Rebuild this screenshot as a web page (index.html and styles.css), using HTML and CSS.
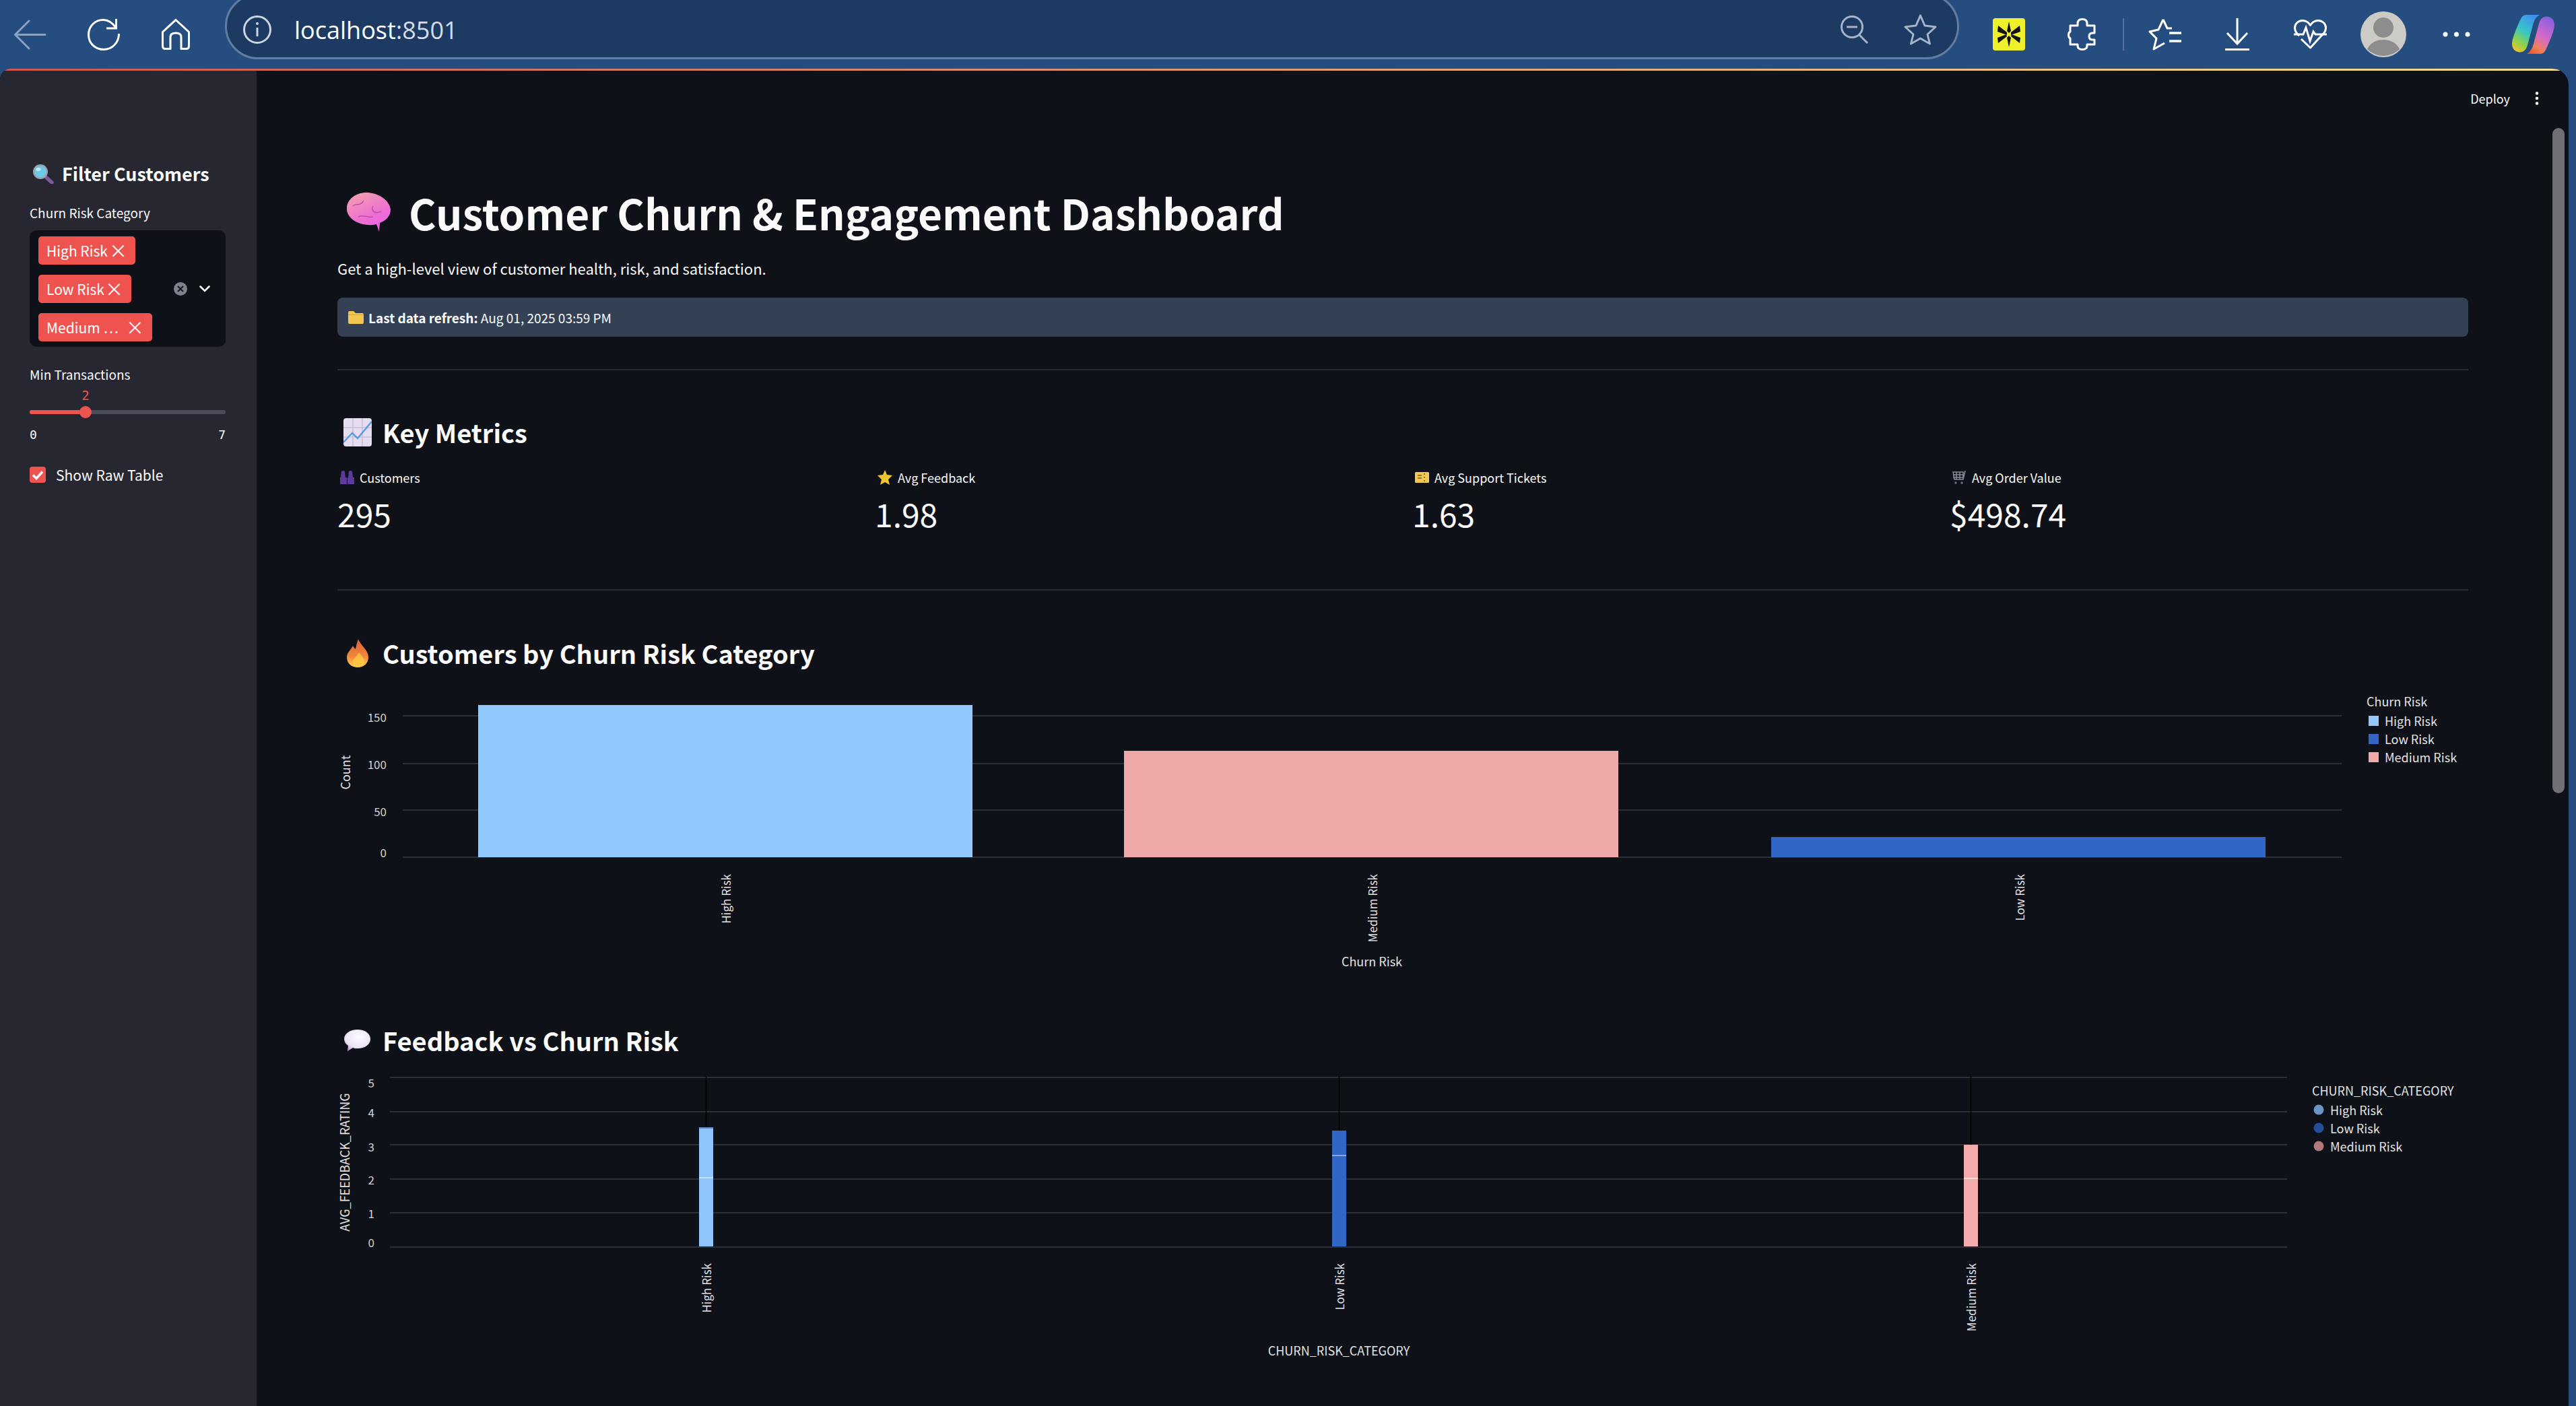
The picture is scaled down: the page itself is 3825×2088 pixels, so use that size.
FILE: index.html
```html
<!DOCTYPE html>
<html lang="en">
<head>
<meta charset="utf-8">
<title>Customer Churn &amp; Engagement Dashboard</title>
<link rel="stylesheet" href="styles.css">
</head>
<body>
<header class="toolbar">
  <svg class="tb back" width="49" height="45" viewBox="0 0 49 45"><path d="M47 22.5H3M23 2 2.500 22.500 23 43" fill="none" stroke="#8ba2c2" stroke-width="3" stroke-linecap="round" stroke-linejoin="round"/></svg>
  <svg class="tb reload" width="48" height="48" viewBox="0 0 48 48"><path d="M25 2.500C12 1.500 1.500 11.500 1.500 24.500S11.500 46.500 24 46.500 46.500 36.500 46.500 23M24.500 2.500C31 3 37 7 41.500 13.500M42.500 1V15H28" fill="none" stroke="#fff" stroke-width="3"/></svg>
  <svg class="tb home" width="42" height="46" viewBox="0 0 42 46"><path d="M1.500 19.500 21 1.500l19.500 18V40q0 4.500-4 4.500H29V27q0-6-8-6t-8 6V44.500H5.500q-4 0-4-4.500Z" fill="none" stroke="#fff" stroke-width="3" stroke-linejoin="round"/></svg>
  <div class="address">
    <svg width="42" height="42" viewBox="0 0 42 42"><circle cx="21" cy="21" r="19.500" fill="none" stroke="#ccd6e3" stroke-width="3"/><path d="M21 18v13" stroke="#ccd6e3" stroke-width="3"/><circle cx="21" cy="12" r="2" fill="#ccd6e3"/></svg>
    <span class="url">localhost<span class="url-port">:8501</span></span>
    <span class="address-gap"></span>
    <svg width="42" height="42" viewBox="0 0 42 42"><circle cx="17" cy="17" r="15.500" fill="none" stroke="#a5b4c8" stroke-width="3"/><path d="M9 17h16M28 29l12 12" stroke="#a5b4c8" stroke-width="3"/></svg>
    <svg class="addr-star" width="49" height="46" viewBox="0 0 49 46"><path d="M24.500 2 31 17l16 2-12 11 3.500 14-14-8-14 8L14 30 2 19l16-2Z" fill="none" stroke="#a5b4c8" stroke-width="3" stroke-linejoin="round"/></svg>
  </div>
  <svg class="tb ext" width="48" height="48" viewBox="0 0 48 48"><rect width="48" height="48" rx="4" fill="#eef02c"/><path d="M24 5l3 14-3 3-3-3ZM24 43l3-14-3-3-3 3ZM8 11l13 10v4L7 20ZM40 11 27 21v4l14-5ZM8 37l13-10-1-3-13 5ZM40 37 27 27l1-3 13 5Z" fill="#111"/></svg>
  <svg class="tb puzzle" width="43" height="48" viewBox="0 0 43 48"><path d="M15 8q0-6.500 7-6.500T29 8v3h11v11h-3q-5 0-5 5t5 5h3v7H29v2q0 5.500-7 5.500T15 41v-2H4v-9q-2.500-1-2.500-5T4 20V11H15Z" fill="none" stroke="#fff" stroke-width="3" stroke-linejoin="round"/></svg>
  <span class="tb-divider"></span>
  <svg class="tb fav" width="49" height="48" viewBox="0 0 49 48"><path d="M22 2 15 17 2 20l10 10-4 16 16-9M22 2l6 13h7" fill="none" stroke="#fff" stroke-width="3" stroke-linejoin="round"/><path d="M31 22h18M31 34h18" stroke="#fff" stroke-width="3.500"/></svg>
  <svg class="tb download" width="36" height="48" viewBox="0 0 36 48"><path d="M18 0V37M3 22l15 16 15-16" fill="none" stroke="#fff" stroke-width="3"/><path d="M0 46.500h36" stroke="#fff" stroke-width="3"/></svg>
  <svg class="tb heart" width="49" height="44" viewBox="0 0 49 44"><path d="M8 24C3 20 1.500 15 1.500 12 1.500 6 7 1.500 13 1.500c5 0 9 3 11.500 7 2.500-4 6.500-7 11.500-7 6 0 11.500 4.500 11.500 10.500 0 3-1.500 8-6.500 12L24.500 42 11 29" fill="none" stroke="#fff" stroke-width="3" stroke-linejoin="round"/><path d="M0 22h14l4-10 6 20 5-14 3 4h17" fill="none" stroke="#fff" stroke-width="3"/></svg>
  <svg class="tb avatar" width="68" height="68" viewBox="0 0 68 68"><circle cx="34" cy="34" r="34" fill="#cdcbc6"/><ellipse cx="34" cy="24" rx="15" ry="15" fill="#8d8d8d"/><path d="M10 56C15 46 24 42 34 42s19 4 24 14a34 34 0 0 1-48 0Z" fill="#8d8d8d"/></svg>
  <svg class="tb dots" width="41" height="8" viewBox="0 0 41 8"><circle cx="4" cy="4" r="3.500" fill="#fff"/><circle cx="20.500" cy="4" r="3.500" fill="#fff"/><circle cx="37" cy="4" r="3.500" fill="#fff"/></svg>
  <svg class="tb copilot" width="65" height="60" viewBox="0 0 65 60">
    <defs>
      <linearGradient id="cpA" x1="0.700" y1="0" x2="0.200" y2="1"><stop offset="0" stop-color="#3f8ff0"/><stop offset=".45" stop-color="#38c6c8"/><stop offset=".75" stop-color="#8bd24c"/><stop offset="1" stop-color="#f2c230"/></linearGradient>
      <linearGradient id="cpB" x1="0.700" y1="0" x2="0.200" y2="1"><stop offset="0" stop-color="#8a5fe0"/><stop offset=".5" stop-color="#d86ac8"/><stop offset=".8" stop-color="#f0805a"/><stop offset="1" stop-color="#ef5a30"/></linearGradient>
    </defs>
    <path d="M22 1H42C38 3 34 8 32 16L24 46C22 54 16 58 10 56 4 55 1 50 1 44 1 36 8 20 13 9 15 4 18 1 22 1Z" fill="url(#cpA)"/>
    <path d="M43 59H23C27 57 31 52 33 44L41 14C43 6 49 2 55 4 61 5 64 10 64 16 64 24 57 40 52 51 50 56 47 59 43 59Z" fill="url(#cpB)"/>
  </svg>
</header>

<div class="window">
  <div class="decoration"></div>
  <div class="app">
    <aside class="sidebar">
      <h3 class="side-title">
        <svg class="side-emoji" width="32" height="30" viewBox="0 0 32 30"><path d="M19 19l10 9" stroke="#7c5a9c" stroke-width="5.500" stroke-linecap="round"/><circle cx="12" cy="12" r="11" fill="#9aa4ac"/><circle cx="12" cy="12" r="8.500" fill="#6fc9e8"/><ellipse cx="9" cy="8.500" rx="3.500" ry="2.500" fill="#bfeaf6"/></svg>
        Filter Customers
      </h3>
      <div class="field-label">Churn Risk Category</div>
      <div class="multiselect">
        <div class="tags">
          <span class="tag tag-high">High Risk<span class="tag-x">×</span></span>
          <span class="tag tag-low">Low Risk<span class="tag-x">×</span></span>
          <span class="tag tag-med">Medium …<span class="tag-x">×</span></span>
        </div>
        <svg width="20" height="20" viewBox="0 0 20 20"><circle cx="10" cy="10" r="10" fill="#7f828e"/><path d="M6 6l8 8M14 6l-8 8" stroke="#14161c" stroke-width="2"/></svg>
        <svg class="chevron" width="16" height="10" viewBox="0 0 16 10"><path d="M1.500 1.500 8 8l6.500-6.500" fill="none" stroke="#fff" stroke-width="2.500" stroke-linecap="round"/></svg>
      </div>
      <div class="field-label label-slider">Min Transactions</div>
      <div class="slider-value"><span class="slider-num">2</span></div>
      <div class="track"><div class="track-fill" style="width:83px"></div><span class="thumb"></span></div>
      <div class="ticks"><span>0</span><span>7</span></div>
      <label class="check">
        <svg width="24" height="24" viewBox="0 0 24 24"><rect width="24" height="24" rx="4" fill="#ee5350"/><path d="M5 12.500l5 5L19 7.500" fill="none" stroke="#fff" stroke-width="3.500"/></svg>
        Show Raw Table
      </label>
    </aside>

    <main class="main">
      <div class="app-header"><span class="deploy">Deploy</span><svg class="kebab" width="6" height="20" viewBox="0 0 6 20"><circle cx="3" cy="2.500" r="2.300" fill="#fff"/><circle cx="3" cy="10" r="2.300" fill="#fff"/><circle cx="3" cy="17.500" r="2.300" fill="#fff"/></svg></div>
      <div class="content">
        <h1 class="page-title">
          <span class="title-emoji">
            <svg width="66" height="58" viewBox="0 0 66 58"><defs><linearGradient id="brain" x1="0.200" y1="0" x2="0.700" y2="1"><stop offset="0" stop-color="#f2a0b0"/><stop offset=".6" stop-color="#ee70d0"/><stop offset="1" stop-color="#ec5fe8"/></linearGradient></defs><path d="M30 0C46 0 64 10 66 25 66 36 58 42 50 45L49 58 45 47C34 50 22 47 14 43 5 38 0 30 1 22 2 10 14 0 30 0Z" fill="url(#brain)"/><path d="M10 20C16 14 20 22 26 12M40 20C36 28 44 32 52 28M18 36C26 32 32 38 40 36" fill="none" stroke="#c24fa8" stroke-width="1.500"/></svg>
          </span>
          Customer Churn &amp; Engagement Dashboard
        </h1>
        <p class="subtitle">Get a high-level view of customer health, risk, and satisfaction.</p>
        <div class="refresh">
          <svg width="23" height="20" viewBox="0 0 23 20"><path d="M0 3q0-2 2-2h6l3 3h10q2 0 2 2v12q0 2-2 2H2q-2 0-2-2Z" fill="#f3c64f"/><path d="M0 6h23v1H0Z" fill="#d9a536"/></svg>
          <span><b>Last data refresh:</b> Aug 01, 2025 03:59 PM</span>
        </div>
        <hr class="rule rule-a">
        <h2 class="section section-metrics">
          <span class="section-emoji"><svg width="42" height="42" viewBox="0 0 42 42"><rect width="42" height="42" rx="4" fill="#e6ddf0"/><path d="M14 0v42M28 0v42M0 14h42M0 28h42" stroke="#c6bed2" stroke-width="1.500"/><path d="M0 36l13-14 8 8L42 5" fill="none" stroke="#5a9ee0" stroke-width="2.500"/></svg></span>
          Key Metrics
        </h2>
        <div class="metrics">
          <div class="metric">
            <div class="metric-label"><svg width="21" height="20" viewBox="0 0 21 20"><path d="M2 1q3-2 5 0l1 9h2v10H0V10h1ZM13 1q3-2 5 0l1 9h2v10H11V10h1Z" fill="#5b3a9c"/></svg>Customers</div>
            <div class="metric-value">295</div>
          </div>
          <div class="metric">
            <div class="metric-label"><svg width="22" height="22" viewBox="0 0 22 22"><path d="M11 0l3 7 8 1-6 6 2 8-7-4-7 4 2-8-6-6 8-1Z" fill="#f0c530"/></svg>Avg Feedback</div>
            <div class="metric-value">1.98</div>
          </div>
          <div class="metric">
            <div class="metric-label"><svg width="21" height="16" viewBox="0 0 21 16"><rect width="21" height="16" rx="1.500" fill="#f3c850"/><path d="M14 2v2M14 7v2M14 12v2M4 5h6M4 9h6" stroke="#7a5a20" stroke-width="1.500"/></svg>Avg Support Tickets</div>
            <div class="metric-value">1.63</div>
          </div>
          <div class="metric">
            <div class="metric-label"><svg width="21" height="20" viewBox="0 0 21 20"><path d="M1 2h15v11H3ZM6 2v11M11 2v11M1 6h15M1 10h15M16 13l3-13" fill="none" stroke="#8a8a9c" stroke-width="1.500"/><circle cx="5" cy="18" r="1.700" fill="#6a6f9c"/><circle cx="14" cy="18" r="1.700" fill="#6a6f9c"/></svg>Avg Order Value</div>
            <div class="metric-value">$498.74</div>
          </div>
        </div>
        <hr class="rule rule-b">
        <h2 class="section section-churn">
          <span class="section-emoji"><svg width="32" height="42" viewBox="0 0 32 42"><defs><linearGradient id="flame" x1="0.500" y1="0" x2="0.500" y2="1"><stop offset="0" stop-color="#e2603a"/><stop offset=".6" stop-color="#f0863a"/><stop offset="1" stop-color="#fbd24a"/></linearGradient></defs><path d="M17 0c2 8 15 16 15 27 0 9-7 15-16 15S0 36 0 27C0 20 6 16 9 10c1 3 3 4 4 5 1-5 2-10 4-15Z" fill="url(#flame)"/><path d="M18 20c4 5 8 9 8 13 0 5-4 9-9 9s-8-4-8-8c0-5 6-8 9-14Z" fill="#fcc944" opacity=".8"/></svg></span>
          Customers by Churn Risk Category
        </h2>
        <svg class="chart chart-bars" width="3164" height="430" viewBox="501 1020 3164 430">
          <g class="grid"><path d="M598 1063H3477M598 1134H3477M598 1203H3477M598 1273H3477"/></g>
          <rect x="710" y="1047" width="734" height="226" fill="#93c8fe"/>
          <rect x="1669" y="1115" width="734" height="158" fill="#f0a9a9"/>
          <rect x="2630" y="1243" width="734" height="30" fill="#3166c6"/>
          <g class="ticks-y">
            <text x="574" y="1064">150</text><text x="574" y="1134">100</text><text x="574" y="1204">50</text><text x="574" y="1265">0</text>
          </g>
          <text class="axis-title rot" transform="rotate(-90 512 1147)" x="512" y="1147">Count</text>
          <g class="ticks-x">
            <text transform="rotate(-90 1077 1298)" x="1077" y="1298">High Risk</text>
            <text transform="rotate(-90 2037 1298)" x="2037" y="1298">Medium Risk</text>
            <text transform="rotate(-90 2998 1298)" x="2998" y="1298">Low Risk</text>
          </g>
          <text class="axis-title" x="2037" y="1427">Churn Risk</text>
          <g class="legend">
            <text class="legend-title" x="3514" y="1041">Churn Risk</text>
            <rect x="3517" y="1063" width="15" height="15" fill="#93c8fe"/><text x="3541" y="1070">High Risk</text>
            <rect x="3517" y="1090" width="15" height="15" fill="#3166c6"/><text x="3541" y="1097">Low Risk</text>
            <rect x="3517" y="1117" width="15" height="15" fill="#f0a9a9"/><text x="3541" y="1124">Medium Risk</text>
          </g>
        </svg>
        <h2 class="section section-feedback">
          <span class="section-emoji"><svg width="39" height="32" viewBox="0 0 39 32"><defs><radialGradient id="bubble" cx=".55" cy=".35" r=".7"><stop offset="0" stop-color="#fdfbff"/><stop offset=".7" stop-color="#ece4f6"/><stop offset="1" stop-color="#b8a2d6"/></radialGradient></defs><path d="M20 0c11 0 19 6 19 14s-8 14-19 14c-3 0-5 0-7-1L5 32l1-8C2 21 0 18 0 14 0 6 9 0 20 0Z" fill="url(#bubble)"/></svg></span>
          Feedback vs Churn Risk
        </h2>
        <svg class="chart chart-box" width="3164" height="430" viewBox="501 1590 3164 430">
          <g class="grid"><path d="M579 1600H3396M579 1651H3396M579 1700H3396M579 1751H3396M579 1801H3396M579 1852H3396"/></g>
          <path d="M1048.500 1598V1674M1988.500 1598V1679M2926.500 1598V1700" stroke="#000" stroke-width="1.500"/>
          <rect x="1038" y="1674" width="21" height="177" fill="#8fc4fb"/><path d="M1038 1675H1059" stroke="#5d88bf" stroke-width="2"/><path d="M1038 1749H1059" stroke="#c4e0fd" stroke-width="2"/>
          <rect x="1978" y="1679" width="21" height="172" fill="#3166c6"/><path d="M1978 1716H1999" stroke="#8aa8e0" stroke-width="2"/>
          <rect x="2916" y="1700" width="21" height="151" fill="#f3abab"/><path d="M2916 1750H2937" stroke="#fde0d8" stroke-width="2"/>
          <g class="ticks-y">
            <text x="556" y="1607">5</text><text x="556" y="1651">4</text><text x="556" y="1702">3</text><text x="556" y="1751">2</text><text x="556" y="1801">1</text><text x="556" y="1844">0</text>
          </g>
          <text class="axis-title rot" transform="rotate(-90 511 1726)" x="511" y="1726">AVG_FEEDBACK_RATING</text>
          <g class="ticks-x">
            <text transform="rotate(-90 1048 1876)" x="1048" y="1876">High Risk</text>
            <text transform="rotate(-90 1988 1876)" x="1988" y="1876">Low Risk</text>
            <text transform="rotate(-90 2926 1876)" x="2926" y="1876">Medium Risk</text>
          </g>
          <text class="axis-title" x="1988" y="2005">CHURN_RISK_CATEGORY</text>
          <g class="legend">
            <text class="legend-title" x="3433" y="1619">CHURN_RISK_CATEGORY</text>
            <circle cx="3443" cy="1648" r="7.500" fill="#6c94c4"/><text x="3460" y="1648">High Risk</text>
            <circle cx="3443" cy="1675" r="7.500" fill="#234f9a"/><text x="3460" y="1675">Low Risk</text>
            <circle cx="3443" cy="1702" r="7.500" fill="#b07a7c"/><text x="3460" y="1702">Medium Risk</text>
          </g>
        </svg>
      </div>
      <div class="scrollbar"></div>
    </main>
  </div>
</div>
</body>
</html>
```
FILE: styles.css
```css
* { box-sizing: border-box; }
html, body { margin: 0; padding: 0; }
body {
  width: 3825px;
  height: 2088px;
  overflow: hidden;
  background: #264d80;
  color: #fafafa;
  font-family: "Noto Sans CJK SC", "Noto Sans", sans-serif;
}

/* browser chrome */
.toolbar { display: flex; align-items: center; height: 102px; }
.tb { flex: none; display: block; }
.back { margin-left: 20px; }
.reload { margin-left: 61px; }
.home { margin-left: 62px; }
.address {
  flex: none;
  display: flex;
  align-items: center;
  align-self: flex-start;
  width: 2575px;
  height: 98px;
  margin: -10px 0 0 52px;
  padding: 10px 30px 0 24px;
  background: #1c3a62;
  border: 3px solid #617d9f;
  border-radius: 49px;
}
.url { margin-left: 34px; font-family: "Open Sans", sans-serif; font-size: 36px; color: #fff; }
.url-port { color: #d5dde8; }
.address-gap { flex: 1; }
.addr-star { margin-left: 52px; }
.ext { margin-left: 50px; }
.puzzle { margin-left: 63px; }
.tb-divider { flex: none; width: 2px; height: 48px; margin-left: 39px; background: #55739a; }
.fav { margin-left: 36px; }
.download { margin-left: 65px; }
.heart { margin-left: 66px; }
.avatar { margin-left: 50px; }
.dots { margin-left: 54px; }
.copilot { margin-left: 61px; }

.window {
  width: 3814px;
  height: 1986px;
  overflow: hidden;
  border-radius: 16px 24px 0 0;
  background: #0e1117;
}
.decoration { height: 3px; background: linear-gradient(90deg, #cb5850, #f6e188); }
.app { display: flex; height: 1983px; }

/* sidebar */
.sidebar { flex: none; width: 381px; padding: 133px 46px 0 44px; background: #262730; }
.side-title { display: flex; align-items: center; margin: 0; height: 40px; font-size: 27px; font-weight: 700; line-height: 40px; }
.side-emoji { margin: 0 12px 0 4px; }
.field-label { height: 28px; margin-top: 24px; font-size: 19px; line-height: 28px; }
.multiselect {
  display: flex;
  align-items: center;
  height: 173px;
  margin-top: 12px;
  padding: 9px 23px 9px 13px;
  background: #0e1117;
  border-radius: 10px;
}
.tags { display: flex; flex: 1; flex-direction: column; align-items: flex-start; gap: 15px; }
.tag {
  display: flex;
  align-items: center;
  justify-content: space-between;
  height: 42px;
  padding: 0 12px;
  background: #ee5350;
  border-radius: 5px;
  color: #fff;
  font-size: 21px;
  white-space: nowrap;
}
.tag-high { width: 144px; }
.tag-low { width: 138px; }
.tag-med { width: 169px; }
.tag-x { font-size: 27px; line-height: 1; }
.chevron { margin-left: 18px; }
.label-slider { margin-top: 27px; }
.slider-value { height: 26px; margin-top: 4px; font-family: "DejaVu Sans Mono", monospace; font-size: 19px; line-height: 26px; color: #ee5350; }
.slider-num { display: block; width: 166px; text-align: center; }
.track { position: relative; height: 6px; margin-top: 9px; background: #4a4c57; border-radius: 3px; }
.track-fill { height: 6px; background: #ee5350; border-radius: 3px; }
.thumb { position: absolute; left: 74px; top: -6px; width: 18px; height: 18px; border-radius: 50%; background: #ee5350; }
.ticks { display: flex; justify-content: space-between; height: 26px; margin-top: 18px; font-family: "DejaVu Sans Mono", monospace; font-size: 18px; line-height: 26px; }
.check { display: flex; align-items: center; gap: 15px; height: 24px; margin-top: 34px; font-size: 21px; }

/* main */
.main { position: relative; flex: 1; min-width: 0; overflow: hidden; }
.app-header { display: flex; align-items: center; justify-content: flex-end; height: 82px; padding-right: 44px; }
.deploy { font-size: 18px; margin-right: 37px; }
.content { padding: 0 149px 0 120px; }
.page-title { display: flex; align-items: center; height: 80px; margin: 88px 0 0; font-size: 62px; font-weight: 700; line-height: 80px; white-space: nowrap; }
.title-emoji { display: flex; justify-content: flex-end; width: 79px; margin-right: 27px; }
.subtitle { height: 36px; margin: 25px 0 0; font-size: 22px; line-height: 36px; }
.refresh { display: flex; align-items: center; gap: 7px; height: 58px; margin-top: 26px; padding-left: 16px; background: #344154; border-radius: 8px; font-size: 19px; }
.rule { height: 2px; margin: 0; border: 0; background: #2a2c35; }
.rule-a { margin-top: 48px; }
.rule-b { margin-top: 81px; }
.section { display: flex; align-items: center; height: 60px; margin: 0; font-size: 38px; font-weight: 700; line-height: 60px; white-space: nowrap; }
.section-emoji { display: flex; justify-content: center; width: 59px; margin-right: 8px; }
.section-metrics { margin-top: 62px; }
.section-churn { margin-top: 63px; }
.section-feedback { margin-top: 65px; }
.metrics { display: grid; grid-template-columns: repeat(4, 1fr); gap: 28px; margin-top: 22px; }
.metric-label { display: flex; align-items: center; gap: 8px; height: 30px; padding-left: 4px; font-size: 18px; line-height: 30px; }
.metric-value { height: 64px; margin-top: 6px; font-size: 48px; line-height: 64px; }
.chart { display: block; }
.chart-bars { margin-top: 20px; }
.chart-box { margin-top: 15px; }
.grid path { fill: none; stroke: #2c2e38; stroke-width: 2; }
.chart text { font-family: "Noto Sans CJK SC", "Noto Sans", sans-serif; dominant-baseline: central; fill: #e2e2e5; }
.ticks-y text { font-size: 17px; text-anchor: end; fill: #d2d2d6; }
.ticks-x text { font-size: 17px; text-anchor: end; }
.chart .axis-title { font-size: 18px; text-anchor: middle; }
.legend text { font-size: 18px; }
.scrollbar { position: absolute; right: 6px; top: 85px; width: 18px; height: 988px; border-radius: 9px; background: #6f7074; }
```
